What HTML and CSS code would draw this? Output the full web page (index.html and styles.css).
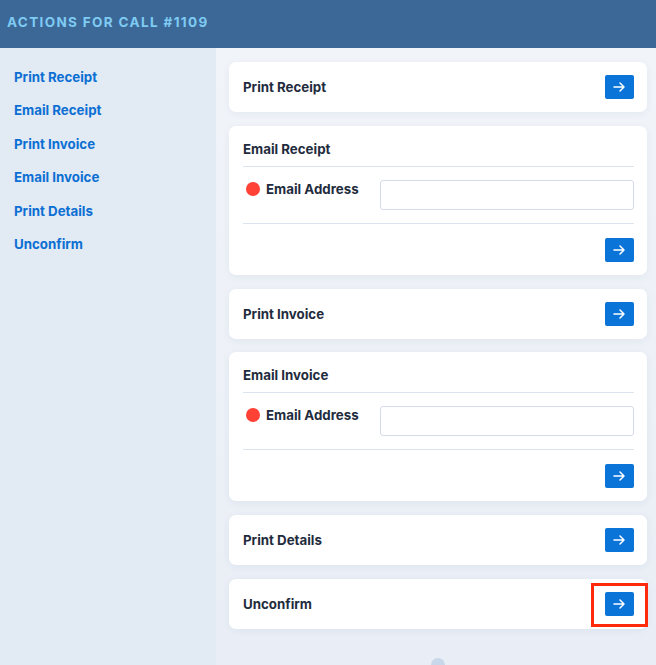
FILE: index.html
```html
<!DOCTYPE html>
<html lang="en">
<head>
<meta charset="utf-8">
<title>Actions for Call #1109</title>
<link rel="stylesheet" href="styles.css">
</head>
<body>
<header class="topbar">
  <h1 class="topbar-title">ACTIONS FOR CALL #1109</h1>
</header>
<div class="layout">
  <nav class="sidebar">
    <a class="side-link" href="#">Print Receipt</a>
    <a class="side-link" href="#">Email Receipt</a>
    <a class="side-link" href="#">Print Invoice</a>
    <a class="side-link" href="#">Email Invoice</a>
    <a class="side-link" href="#">Print Details</a>
    <a class="side-link" href="#">Unconfirm</a>
  </nav>
  <main class="main">
    <section class="card card-simple">
      <h2 class="card-title">Print Receipt</h2>
      <button class="go-btn" aria-label="Go"><svg viewBox="0 0 16 16" class="arrow"><path d="M3 8h10M9 4l4 4-4 4"/></svg></button>
    </section>

    <section class="card card-form">
      <h2 class="card-title card-head">Email Receipt</h2>
      <div class="form-row">
        <label class="field-label"><span class="req-dot"></span>Email Address</label>
        <input class="text-input" type="text">
      </div>
      <div class="card-foot">
        <button class="go-btn" aria-label="Go"><svg viewBox="0 0 16 16" class="arrow"><path d="M3 8h10M9 4l4 4-4 4"/></svg></button>
      </div>
    </section>

    <section class="card card-simple">
      <h2 class="card-title">Print Invoice</h2>
      <button class="go-btn" aria-label="Go"><svg viewBox="0 0 16 16" class="arrow"><path d="M3 8h10M9 4l4 4-4 4"/></svg></button>
    </section>

    <section class="card card-form">
      <h2 class="card-title card-head">Email Invoice</h2>
      <div class="form-row">
        <label class="field-label"><span class="req-dot"></span>Email Address</label>
        <input class="text-input" type="text">
      </div>
      <div class="card-foot">
        <button class="go-btn" aria-label="Go"><svg viewBox="0 0 16 16" class="arrow"><path d="M3 8h10M9 4l4 4-4 4"/></svg></button>
      </div>
    </section>

    <section class="card card-simple">
      <h2 class="card-title">Print Details</h2>
      <button class="go-btn" aria-label="Go"><svg viewBox="0 0 16 16" class="arrow"><path d="M3 8h10M9 4l4 4-4 4"/></svg></button>
    </section>

    <section class="card card-simple">
      <h2 class="card-title">Unconfirm</h2>
      <div class="btn-wrap">
        <button class="go-btn" aria-label="Go"><svg viewBox="0 0 16 16" class="arrow"><path d="M3 8h10M9 4l4 4-4 4"/></svg></button>
        <span class="highlight"></span>
      </div>
    </section>

    <div class="loader-dot"></div>
  </main>
</div>
</body>
</html>
```

FILE: styles.css
```css
* { box-sizing: border-box; }
html, body { margin: 0; padding: 0; }
body {
  font-family: Inter, "Noto Sans", sans-serif;
  background: #eef2f8;
  width: 656px;
  height: 665px;
  overflow: hidden;
}
.topbar {
  height: 48px;
  background: #3c6897;
  display: flex;
  align-items: center;
  padding-left: 7px;
  padding-bottom: 5px;
}
.topbar-title {
  margin: 0;
  font-size: 13.5px;
  font-weight: 700;
  letter-spacing: 1.35px;
  color: #7fcbf3;
}
.layout {
  display: flex;
  height: 617px;
}
.sidebar {
  width: 216px;
  flex: none;
  background: #e2eaf4;
  display: flex;
  flex-direction: column;
  gap: 13.4px;
  padding: 19px 0 0 14px;
}
.side-link {
  font-size: 13.3px;
  line-height: 20px;
  font-weight: 700;
  color: #0b6fd3;
  text-decoration: none;
}
.main {
  flex: 1;
  background: linear-gradient(180deg, #f1f4f9 0%, #e9eef6 100%);
  padding: 14px 9px 0 13px;
  display: flex;
  flex-direction: column;
  gap: 13.8px;
  position: relative;
}
.card {
  background: #fff;
  border-radius: 7px;
  box-shadow: 0 2px 8px rgba(40, 70, 120, 0.06);
  padding: 13px 13px 13px 14px;
}
.card-simple {
  display: flex;
  align-items: center;
  justify-content: space-between;
  height: 50px;
}
.card-title {
  margin: 0;
  font-size: 13.3px;
  font-weight: 700;
  color: #1f2c3d;
  line-height: 18px;
}
.card-form {
  height: 149px;
}
.card-head {
  padding-top: 1px;
  padding-bottom: 8px;
  border-bottom: 1px solid #dbe3ee;
}
.form-row {
  display: flex;
  align-items: flex-start;
  padding: 13px 0 13px;
  border-bottom: 1px solid #dbe3ee;
}
.field-label {
  width: 137px;
  flex: none;
  display: flex;
  align-items: center;
  gap: 6px;
  font-size: 13.3px;
  font-weight: 700;
  color: #1f2c3d;
  padding-left: 3px;
  height: 18px;
}
.req-dot {
  width: 14px;
  height: 14px;
  border-radius: 50%;
  background: #ff4136;
  flex: none;
}
.text-input {
  flex: 1;
  height: 30px;
  border: 1px solid #d3dce8;
  border-radius: 3px;
  background: #fff;
  font: inherit;
}
.card-foot {
  display: flex;
  justify-content: flex-end;
  padding-top: 14px;
}
.go-btn {
  width: 29px;
  height: 24px;
  border: none;
  border-radius: 2px;
  background: #0b74d9;
  display: flex;
  align-items: center;
  justify-content: center;
  padding: 0;
  flex: none;
}
.arrow {
  width: 16px;
  height: 16px;
  margin-left: -1px;
  fill: none;
  stroke: #fff;
  stroke-width: 1.5;
  stroke-linecap: round;
  stroke-linejoin: round;
}
.btn-wrap {
  position: relative;
}
.highlight {
  position: absolute;
  left: -14px;
  right: -14px;
  top: -9px;
  bottom: -11px;
  border: 3px solid #ff2a0c;
  pointer-events: none;
}
.loader-dot {
  position: absolute;
  left: 215px;
  top: 610px;
  width: 14px;
  height: 14px;
  border-radius: 50%;
  background: #c8d7ea;
}
```
